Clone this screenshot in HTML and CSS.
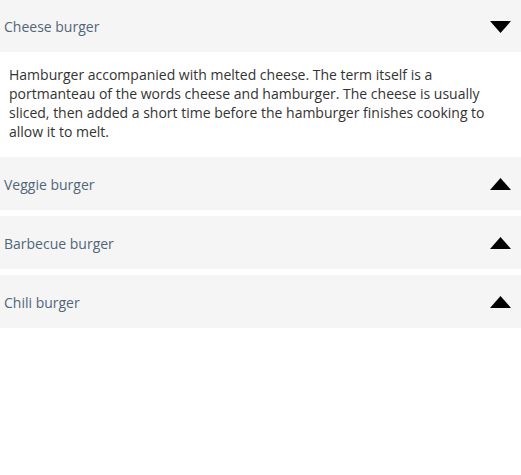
FILE: index.html
```html
<!DOCTYPE html>
<html lang="en">
<head>
<meta charset="utf-8">
<title>Burgers</title>
<link rel="stylesheet" href="styles.css">
</head>
<body>
<div class="accordion">
  <div class="item open">
    <div class="header">
      <span class="title">Cheese burger</span>
      <svg class="arrow" width="21" height="12" viewBox="0 0 21 12"><polygon points="0,0 21,0 10.5,12" fill="#000"/></svg>
    </div>
    <div class="content">
      <p>Hamburger accompanied with melted cheese. The term itself is a portmanteau of the words cheese and hamburger. The cheese is usually sliced, then added a short time before the hamburger finishes cooking to allow it to melt.</p>
    </div>
  </div>
  <div class="item">
    <div class="header">
      <span class="title">Veggie burger</span>
      <svg class="arrow" width="21" height="12" viewBox="0 0 21 12"><polygon points="0,12 21,12 10.5,0" fill="#000"/></svg>
    </div>
  </div>
  <div class="item">
    <div class="header">
      <span class="title">Barbecue burger</span>
      <svg class="arrow" width="21" height="12" viewBox="0 0 21 12"><polygon points="0,12 21,12 10.5,0" fill="#000"/></svg>
    </div>
  </div>
  <div class="item">
    <div class="header">
      <span class="title">Chili burger</span>
      <svg class="arrow" width="21" height="12" viewBox="0 0 21 12"><polygon points="0,12 21,12 10.5,0" fill="#000"/></svg>
    </div>
  </div>
</div>
</body>
</html>
```
FILE: styles.css
```css
html, body {
  margin: 0;
  padding: 0;
  background: #fff;
}
body {
  font-family: "Open Sans", "Noto Sans", sans-serif;
}
.accordion {
  display: flex;
  flex-direction: column;
  gap: 6px;
}
.header {
  height: 53px;
  background: #f5f5f5;
  display: flex;
  align-items: center;
  justify-content: space-between;
  padding: 0 10px 0 4px;
  box-sizing: border-box;
}
.item.open .header {
  height: 52px;
}
.title {
  font-size: 14px;
  color: #536579;
  margin-top: 1px;
}
.arrow {
  display: block;
  margin-top: 1px;
}
.content {
  padding: 13px 24px 10px 9px;
  background: #fff;
}
.content p {
  margin: 0;
  font-size: 14px;
  line-height: 19px;
  color: #333;
}
```
